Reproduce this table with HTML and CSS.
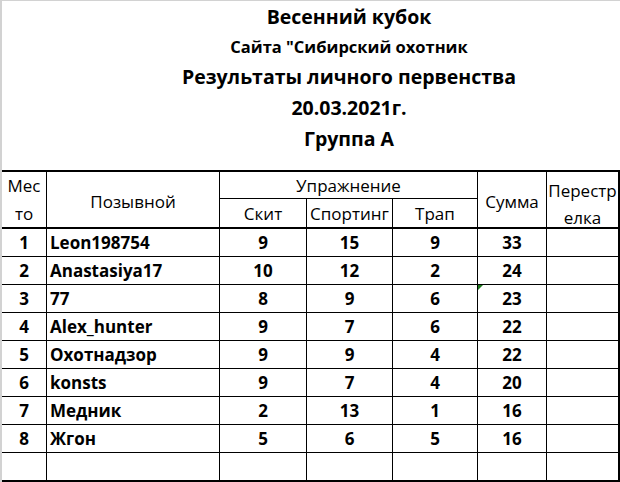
FILE: index.html
```html
<!DOCTYPE html>
<html lang="ru">
<head>
<meta charset="utf-8">
<title>Весенний кубок</title>
<link rel="stylesheet" href="styles.css">
</head>
<body>
<div class="sheet">
  <div class="titles">
    <div class="title first">Весенний кубок</div>
    <div class="subtitle">Сайта "Сибирский охотник</div>
    <div class="title">Результаты личного первенства</div>
    <div class="title">20.03.2021г.</div>
    <div class="title">Группа А</div>
  </div>
  <div class="grid">
    <div class="c h span2 hb two"><span>Мес</span><span>то</span></div>
    <div class="c h span2 hb mid">Позывной</div>
    <div class="c h span3 ex">Упражнение</div>
    <div class="c h span2 hb mid">Сумма</div>
    <div class="c h span2 hb last small"><span>Перестр</span><span>елка</span></div>
    <div class="c h hb sub">Скит</div>
    <div class="c h hb sub">Спортинг</div>
    <div class="c h hb sub">Трап</div>

    <div class="c b">1</div><div class="c b name">Leon198754</div><div class="c b">9</div><div class="c b">15</div><div class="c b">9</div><div class="c b">33</div><div class="c last"></div>
    <div class="c b">2</div><div class="c b name">Anastasiya17</div><div class="c b">10</div><div class="c b">12</div><div class="c b">2</div><div class="c b">24</div><div class="c last"></div>
    <div class="c b">3</div><div class="c b name">77</div><div class="c b">8</div><div class="c b">9</div><div class="c b">6</div><div class="c b flag">23</div><div class="c last"></div>
    <div class="c b">4</div><div class="c b name">Alex_hunter</div><div class="c b">9</div><div class="c b">7</div><div class="c b">6</div><div class="c b">22</div><div class="c last"></div>
    <div class="c b">5</div><div class="c b name">Охотнадзор</div><div class="c b">9</div><div class="c b">9</div><div class="c b">4</div><div class="c b">22</div><div class="c last"></div>
    <div class="c b">6</div><div class="c b name">konsts</div><div class="c b">9</div><div class="c b">7</div><div class="c b">4</div><div class="c b">20</div><div class="c last"></div>
    <div class="c b">7</div><div class="c b name">Медник</div><div class="c b">2</div><div class="c b">13</div><div class="c b">1</div><div class="c b">16</div><div class="c last"></div>
    <div class="c b">8</div><div class="c b name">Жгон</div><div class="c b">5</div><div class="c b">6</div><div class="c b">5</div><div class="c b">16</div><div class="c last"></div>
    <div class="c end"></div><div class="c end"></div><div class="c end"></div><div class="c end"></div><div class="c end"></div><div class="c end"></div><div class="c end last"></div>
  </div>
</div>
</body>
</html>
```

FILE: styles.css
```css
* { box-sizing: border-box; }
html, body { margin: 0; padding: 0; background: #fff; }
body { font-family: "Open Sans", "DejaVu Sans", sans-serif; color: #000; }

.sheet {
  width: 620px;
  height: 482px;
  border-left: 2px solid #d2d2d2;
  border-top: 1px solid #d2d2d2;
  overflow: hidden;
}

.titles {
  height: 169px;
  padding: 1px 0 0 76px;
  text-align: center;
  font-weight: 700;
}
.title { font-size: 19.5px; line-height: 31px; }
.title.first { line-height: 30px; }
.subtitle { font-size: 16.5px; line-height: 29px; }

.grid {
  display: grid;
  grid-template-columns: 45px 173px 87px 86px 85px 69px 73px;
  grid-template-rows: 27px 30px repeat(8, 28px) 29px;
  border-top: 2px solid #000;
}

.c {
  border-right: 1px solid #000;
  border-bottom: 1px solid #000;
  display: flex;
  align-items: center;
  justify-content: center;
  font-size: 17px;
  line-height: 20px;
  position: relative;
  white-space: nowrap;
}
.c.last { border-right-width: 2px; }
.c.hb { border-bottom-width: 2px; }
.c.end { border-bottom-width: 2px; }

.span2 { grid-row: span 2; }
.span3 { grid-column: span 3; }

.h { font-weight: 400; }
.two {
  flex-direction: column;
  justify-content: flex-start;
  line-height: 28px;
}
.mid { padding-top: 4px; }
.ex { padding-top: 2px; }
.sub { padding-top: 2px; }
.small {
  flex-direction: column;
  justify-content: flex-start;
  line-height: 18px;
  gap: 9px;
  padding-top: 10px;
}

.b { font-weight: 700; }
.name { justify-content: flex-start; padding-left: 3px; }

.flag::before {
  content: "";
  position: absolute;
  left: 0;
  top: 0;
  border-top: 5px solid #1e7a1e;
  border-right: 5px solid transparent;
}
```
